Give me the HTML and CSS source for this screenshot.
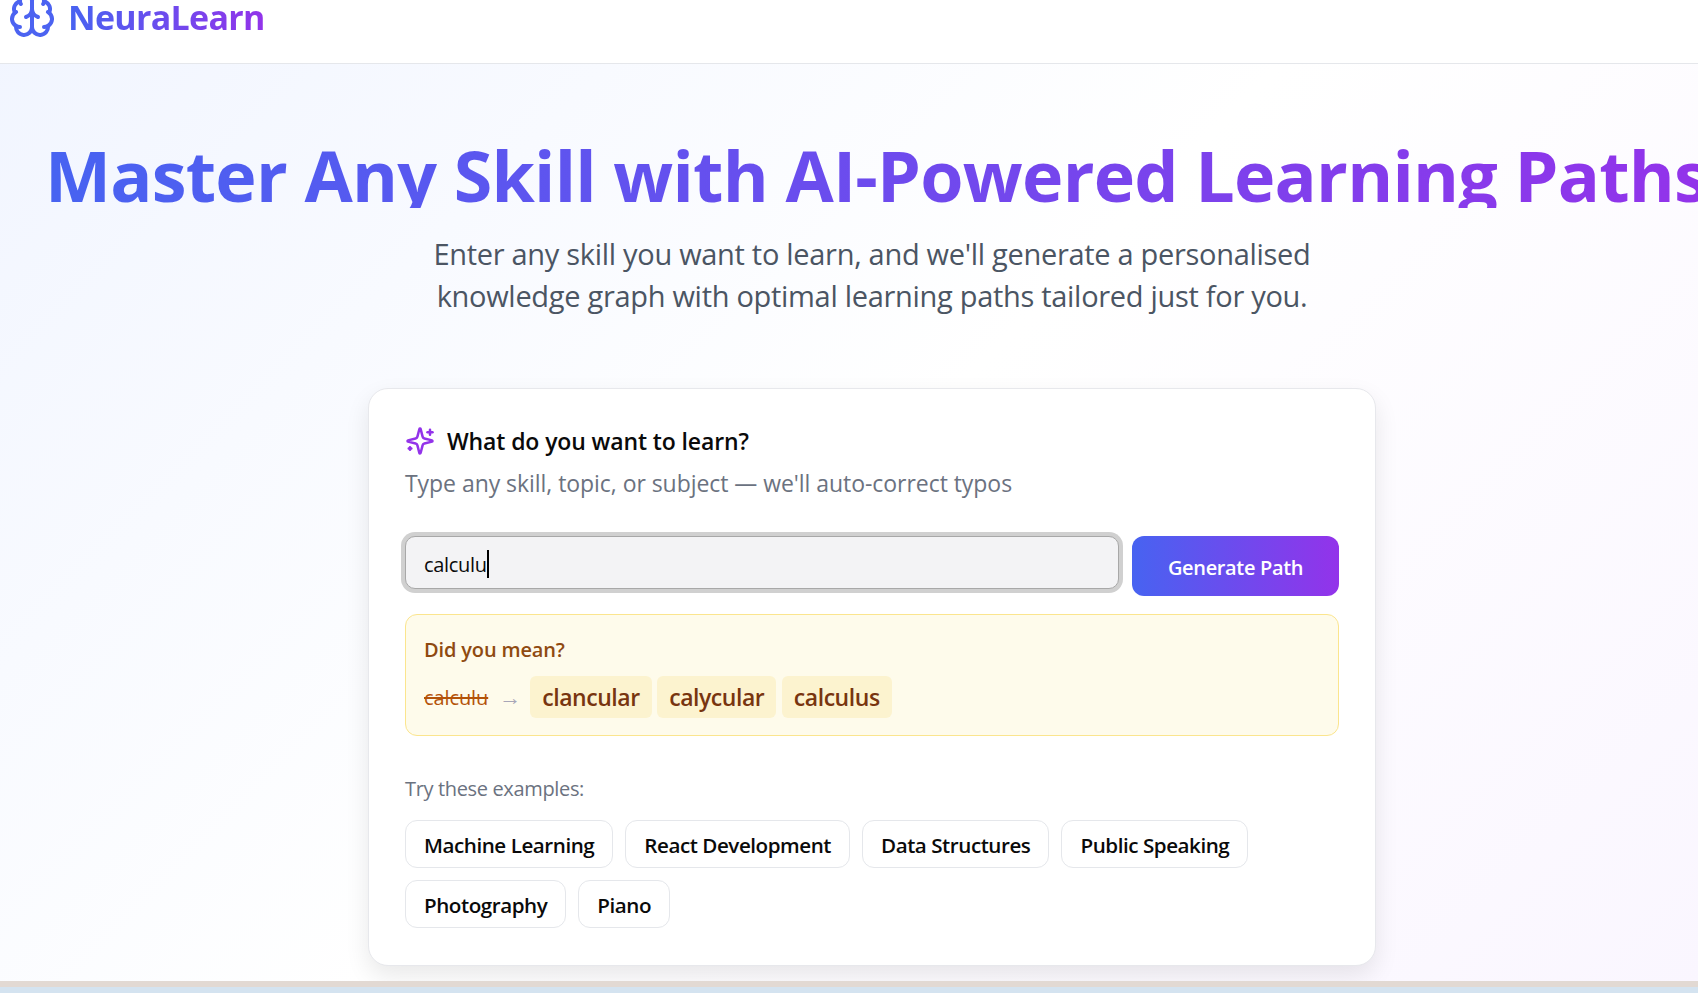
FILE: index.html

```html
<!DOCTYPE html>
<html lang="en">
<head>
  <meta charset="UTF-8">
  <meta name="viewport" content="width=device-width, initial-scale=1.0">
  <title>NeuraLearn</title>
  <link rel="stylesheet" href="styles.css">
</head>
<body>
  <div class="page">
    <header class="header">
      <svg class="brain" viewBox="0 0 24 24" fill="none" stroke="currentColor" stroke-width="2" stroke-linecap="round" stroke-linejoin="round">
        <path d="M12 5a3 3 0 1 0-5.997.125 4 4 0 0 0-2.526 5.77 4 4 0 0 0 .556 6.588A4 4 0 1 0 12 18Z"/>
        <path d="M12 5a3 3 0 1 1 5.997.125 4 4 0 0 1 2.526 5.77 4 4 0 0 1-.556 6.588A4 4 0 1 1 12 18Z"/>
        <path d="M15 13a4.5 4.5 0 0 1-3-4 4.5 4.5 0 0 1-3 4"/>
        <path d="M17.599 6.5a3 3 0 0 0 .399-1.375"/>
        <path d="M6.003 5.125A3 3 0 0 0 6.401 6.5"/>
        <path d="M3.477 10.896a4 4 0 0 1 .585-.396"/>
        <path d="M19.938 10.5a4 4 0 0 1 .585.396"/>
        <path d="M6 18a4 4 0 0 1-1.967-.516"/>
        <path d="M19.967 17.484A4 4 0 0 1 18 18"/>
      </svg>
      <span class="logo">NeuraLearn</span>
    </header>

    <main class="main">
      <h1 class="title">Master Any Skill with AI-Powered Learning Paths</h1>
      <p class="lead">Enter any skill you want to learn, and we'll generate a personalised<br>knowledge graph with optimal learning paths tailored just for you.</p>

      <section class="card">
        <div class="card-head">
          <svg class="sparkles" viewBox="0 0 24 24" fill="none" stroke="currentColor" stroke-width="2" stroke-linecap="round" stroke-linejoin="round">
            <path d="M9.937 15.5A2 2 0 0 0 8.5 14.063l-6.135-1.582a.5.5 0 0 1 0-.962L8.5 9.936A2 2 0 0 0 9.937 8.5l1.582-6.135a.5.5 0 0 1 .963 0L14.063 8.5A2 2 0 0 0 15.5 9.937l6.135 1.581a.5.5 0 0 1 0 .964L15.5 14.063a2 2 0 0 0-1.437 1.437l-1.582 6.135a.5.5 0 0 1-.963 0z"/>
            <path d="M20 3v4"/>
            <path d="M22 5h-4"/>
            <path d="M4 17v2"/>
            <path d="M5 18H3"/>
          </svg>
          <h2>What do you want to learn?</h2>
        </div>
        <p class="card-sub">Type any skill, topic, or subject — we'll auto-correct typos</p>

        <div class="search">
          <div class="field">calculu<span class="caret"></span></div>
          <button class="generate">Generate Path</button>
        </div>

        <div class="suggest">
          <div class="suggest-title">Did you mean?</div>
          <div class="suggest-row">
            <s class="typo">calculu</s>
            <span class="arrow">→</span>
            <span class="chips">
              <span class="chip">clancular</span>
              <span class="chip">calycular</span>
              <span class="chip">calculus</span>
            </span>
          </div>
        </div>

        <div class="try">Try these examples:</div>
        <div class="pills">
          <button class="pill">Machine Learning</button>
          <button class="pill">React Development</button>
          <button class="pill">Data Structures</button>
          <button class="pill">Public Speaking</button>
          <button class="pill">Photography</button>
          <button class="pill">Piano</button>
        </div>
      </section>
    </main>

    <div class="strip"></div>
  </div>
</body>
</html>
```

FILE: styles.css

```css
* {
  box-sizing: border-box;
}
html, body {
  margin: 0;
  padding: 0;
  height: 100%;
  overflow: hidden;
}
body {
  font-family: 'Open Sans', 'Noto Sans', sans-serif;
  color: #0a0a0a;
}
.page {
  height: 993px;
  display: flex;
  flex-direction: column;
  background: linear-gradient(135deg, #f1f5ff 0%, #ffffff 50%, #faf6ff 100%);
  overflow: hidden;
}
.header {
  height: 64px;
  flex-shrink: 0;
  display: flex;
  align-items: flex-start;
  gap: 12px;
  padding-left: 8px;
  background: #ffffff;
  border-bottom: 1px solid #e5e7eb;
}
.brain {
  width: 48px;
  height: 48px;
  margin-top: -9px;
  flex-shrink: 0;
  color: #4c63f1;
}
.logo {
  font-size: 34px;
  font-weight: 700;
  line-height: 34px;
  letter-spacing: -0.7px;
  background: linear-gradient(90deg, #4763f1, #9333ea);
  -webkit-background-clip: text;
  background-clip: text;
  color: transparent;
}
.main {
  flex: 1;
  min-height: 0;
  display: flex;
  flex-direction: column;
  align-items: center;
  padding: 78px 0 0 46px;
}
.title {
  margin: 0 0 25px 9px;
  flex-shrink: 0;
  white-space: nowrap;
  font-size: 70px;
  line-height: 66px;
  font-weight: 700;
  letter-spacing: -0.76px;
  background: linear-gradient(90deg, #4763f1, #9333ea);
  -webkit-background-clip: text;
  background-clip: text;
  color: transparent;
}
.lead {
  margin: 0 0 71px;
  font-size: 29px;
  line-height: 42px;
  color: #4b5563;
  text-align: center;
  letter-spacing: -0.3px;
}
.card {
  width: 1008px;
  height: 578px;
  flex-shrink: 0;
  padding: 37px 36px 36px;
  background: #ffffff;
  border: 1px solid #e7e8ec;
  border-radius: 20px;
  box-shadow: 0 10px 25px rgba(0, 0, 0, 0.09);
}
.card-head {
  display: flex;
  align-items: center;
  gap: 12px;
  height: 30px;
}
.sparkles {
  width: 30px;
  height: 30px;
  color: #9333ea;
  flex-shrink: 0;
}
.card-head h2 {
  margin: 0;
  font-size: 23px;
  font-weight: 600;
  letter-spacing: -0.12px;
}
.card-sub {
  margin: 11px 0 0;
  font-size: 23px;
  line-height: 32px;
  color: #6b7280;
  letter-spacing: -0.05px;
}
.search {
  display: flex;
  align-items: flex-start;
  gap: 13px;
  margin-top: 37px;
}
.field {
  flex: 1;
  height: 53px;
  display: flex;
  align-items: center;
  padding: 3px 0 0 18px;
  background: #f3f3f5;
  border: 1px solid #a8a8a8;
  border-radius: 10px;
  box-shadow: 0 0 0 4px #d0d0d0;
  font-size: 20px;
  letter-spacing: -0.3px;
}
.caret {
  width: 2px;
  height: 28px;
  background: #000000;
}
.generate {
  width: 207px;
  height: 60px;
  padding: 2px 0 0;
  border: none;
  border-radius: 12px;
  background: linear-gradient(90deg, #4763f1, #9333ea);
  color: #ffffff;
  font-family: inherit;
  font-size: 20px;
  font-weight: 600;
  letter-spacing: -0.35px;
}
.suggest {
  height: 122px;
  margin-top: 18px;
  padding: 21px 18px;
  background: #fefbeb;
  border: 1px solid #fbe58e;
  border-radius: 12px;
}
.suggest-title {
  font-size: 20px;
  line-height: 28px;
  font-weight: 600;
  color: #8f4a10;
  letter-spacing: -0.15px;
}
.suggest-row {
  display: flex;
  align-items: center;
  margin-top: 12px;
}
.typo {
  font-size: 20px;
  color: #b45309;
  letter-spacing: -0.1px;
}
.arrow {
  margin: -3px 9px 0 11px;
  font-size: 22px;
  color: #a8a6b8;
}
.chips {
  display: flex;
  gap: 5.5px;
}
.chip {
  height: 42px;
  padding: 0 12px;
  display: flex;
  align-items: center;
  background: #fcf3cf;
  border-radius: 6px;
  font-size: 23px;
  font-weight: 600;
  color: #78350f;
  letter-spacing: -0.45px;
}
.try {
  margin-top: 39px;
  font-size: 20px;
  line-height: 28px;
  color: #6b7280;
  letter-spacing: -0.35px;
}
.pills {
  display: flex;
  flex-wrap: wrap;
  gap: 12px;
  margin-top: 17px;
}
.pill {
  height: 48px;
  padding: 2px 18px 0;
  background: #ffffff;
  border: 1px solid #e5e7eb;
  border-radius: 12px;
  font-family: inherit;
  font-size: 20.6px;
  font-weight: 600;
  color: #0a0a0a;
  letter-spacing: -0.45px;
}
.strip {
  height: 12px;
  flex-shrink: 0;
  border-top: 6px solid #e2d9d3;
  background: #d4e3f0;
}
```
